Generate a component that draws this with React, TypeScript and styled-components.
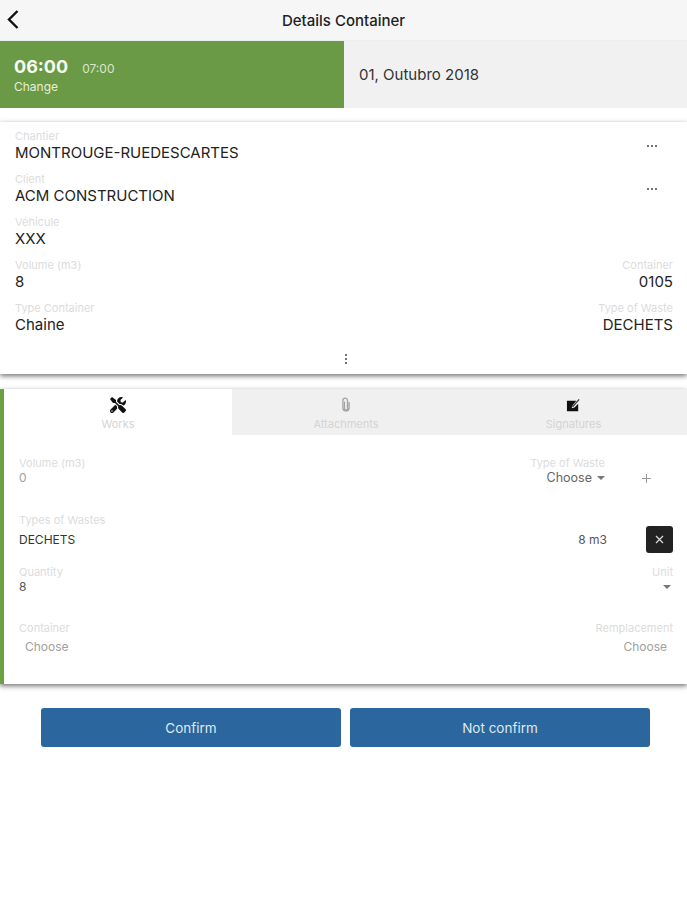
import React from "react";
import styled, { createGlobalStyle } from "styled-components";
import { FaTools } from "react-icons/fa";

const Global = createGlobalStyle`
  html, body { margin: 0; padding: 0; background: #fff; }
  body { font-family: Inter, Roboto, "Liberation Sans", sans-serif; }
`;

const Page = styled.div`
  width: 687px;
  height: 900px;
  overflow: hidden;
  display: flex;
  flex-direction: column;
  background: #fff;
`;

const Header = styled.header`
  height: 40px;
  flex: none;
  display: grid;
  grid-template-columns: 60px 1fr 60px;
  align-items: center;
  background: #f6f6f6;
  border-bottom: 1px solid #eeeeee;
`;

const BackButton = styled.div`
  padding-left: 6px;
  display: flex;
  align-items: center;
`;

const Title = styled.h1`
  margin: 0;
  text-align: center;
  font-size: 15px;
  font-weight: 500;
  color: #222;
`;

const Banner = styled.section`
  height: 67px;
  flex: none;
  display: flex;
  background: #f1f1f1;
`;

const TimeBox = styled.div`
  width: 344px;
  flex: none;
  box-sizing: border-box;
  padding: 15px 0 0 14px;
  background: #6a9a45;
  color: #eef4e8;
`;

const TimeRow = styled.div`
  display: flex;
  align-items: baseline;
  gap: 14px;
  height: 22px;
`;

const TimeStart = styled.span`
  font-size: 18px;
  font-weight: 700;
  color: #f7faf4;
`;

const TimeEnd = styled.span`
  font-size: 12px;
  color: #d9e6cf;
`;

const ChangeLabel = styled.div`
  margin-top: 1px;
  font-size: 12px;
  color: #e6efde;
`;

const DateText = styled.div`
  display: flex;
  align-items: center;
  padding-left: 15px;
  font-size: 15px;
  color: #333;
`;

const InfoCard = styled.section`
  margin-top: 14px;
  height: 252px;
  flex: none;
  box-sizing: border-box;
  padding: 5px 14px 0 15px;
  background: #fff;
  box-shadow: 0 2px 5px rgba(0, 0, 0, 0.55);
  display: flex;
  flex-direction: column;
`;

const InfoRow = styled.div`
  height: 43px;
  flex: none;
  display: flex;
  justify-content: space-between;
`;

const Field = styled.div<{ $right?: boolean }>`
  display: flex;
  flex-direction: column;
  align-items: ${(p) => (p.$right ? "flex-end" : "flex-start")};
`;

const InfoLabel = styled.div`
  height: 16px;
  line-height: 16px;
  margin-top: 1px;
  margin-bottom: -1px;
  font-size: 11px;
  color: #dcdcdc;
`;

const InfoValue = styled.div`
  height: 20px;
  line-height: 20px;
  font-size: 15px;
  color: #222;
`;

const MoreDots = styled.div`
  width: 12px;
  margin: 17px 14px 0 0;
  display: flex;
  gap: 2px;
  height: 4px;
  align-items: center;
`;

const Dot = styled.i`
  width: 2px;
  height: 2px;
  border-radius: 50%;
  background: #444;
`;

const ExpandDots = styled.div`
  margin-top: 12px;
  padding-left: 4px;
  display: flex;
  flex-direction: column;
  align-items: center;
  gap: 2px;
`;

const WorkPanel = styled.section`
  margin-top: 15px;
  height: 295px;
  flex: none;
  box-sizing: border-box;
  border-left: 4px solid #6da041;
  background: #fff;
  box-shadow: 0 2px 5px rgba(0, 0, 0, 0.55);
  display: flex;
  flex-direction: column;
`;

const Tabs = styled.nav`
  height: 46px;
  flex: none;
  display: grid;
  grid-template-columns: 228px 228px 227px;
`;

const Tab = styled.div<{ $active?: boolean }>`
  display: flex;
  flex-direction: column;
  align-items: center;
  padding-top: 7px;
  box-sizing: border-box;
  background: ${(p) => (p.$active ? "#fff" : "#f0f0f0")};
`;

const TabIcon = styled.div`
  height: 18px;
  display: flex;
  align-items: center;
  justify-content: center;
`;

const TabLabel = styled.div`
  margin-top: 3px;
  font-size: 11px;
  line-height: 14px;
  color: #d4d4d4;
`;

const PanelBody = styled.div`
  padding: 21px 14px 0 15px;
  display: flex;
  flex-direction: column;
`;

const FormRow = styled.div<{ $height: number; $top?: number }>`
  height: ${(p) => p.$height}px;
  margin-top: ${(p) => p.$top ?? 0}px;
  flex: none;
  display: flex;
  justify-content: space-between;
`;

const SmallLabel = styled.div`
  height: 14px;
  line-height: 14px;
  font-size: 11px;
  color: #dcdcdc;
`;

const SmallValue = styled.div<{ $indent?: number; $muted?: boolean; $gap?: number }>`
  height: 18px;
  line-height: 18px;
  margin-top: ${(p) => p.$gap ?? 0}px;
  padding: 0 ${(p) => p.$indent ?? 0}px;
  font-size: 12px;
  color: ${(p) => (p.$muted ? "#a0a0a0" : "#555")};
`;

const WasteChooser = styled.div`
  display: flex;
  gap: 14px;
`;

const PlusSign = styled.div`
  width: 54px;
  margin-top: 18px;
  display: flex;
  justify-content: center;
`;

const Choose = styled.div`
  height: 18px;
  line-height: 18px;
  margin-top: -1px;
  font-size: 12.5px;
  color: #666;
  display: flex;
  align-items: center;
  gap: 5px;
`;

const Caret = styled.i`
  width: 0;
  height: 0;
  border-left: 4px solid transparent;
  border-right: 4px solid transparent;
  border-top: 4px solid #777;
`;

const WasteLine = styled.div`
  display: flex;
  align-items: center;
  justify-content: space-between;
  height: 27px;
  margin-top: -1px;
`;

const WasteName = styled.div`
  font-size: 12px;
  color: #333;
`;

const WasteSide = styled.div`
  display: flex;
  align-items: center;
  gap: 39px;
`;

const WasteQty = styled.div`
  font-size: 12px;
  color: #555;
`;

const RemoveButton = styled.div`
  width: 27px;
  height: 27px;
  border-radius: 3px;
  background: #222;
  display: flex;
  align-items: center;
  justify-content: center;
`;

const Actions = styled.div`
  margin-top: 24px;
  padding-left: 41px;
  display: flex;
  gap: 9px;
`;

const ActionButton = styled.button`
  width: 300px;
  height: 39px;
  border: 0;
  border-radius: 3px;
  background: #2b679e;
  color: #dfe9f2;
  font-family: inherit;
  font-size: 13.5px;
  padding: 0;
`;

const Stack = styled.div<{ $right?: boolean }>`
  display: flex;
  flex-direction: column;
  align-items: ${(p) => (p.$right ? "flex-end" : "flex-start")};
`;

const CaretRow = styled.div`
  height: 18px;
  margin-top: -1px;
  display: flex;
  align-items: center;
  padding-right: 2px;
`;

const Fields: [string, string, string?, string?][] = [
  ["Chantier", "MONTROUGE-RUEDESCARTES"],
  ["Client", "ACM CONSTRUCTION"],
  ["Véhicule", "XXX"],
  ["Volume (m3)", "8", "Container", "0105"],
  ["Type Container", "Chaine", "Type of Waste", "DECHETS"],
];

export default function App() {
  return (
    <Page>
      <Global />
      <Header>
        <BackButton>
          <svg width="14" height="22" viewBox="0 0 14 22" fill="none" stroke="#111" strokeWidth="2.4">
            <path d="M11.5 2 3 10.5 11.5 19" />
          </svg>
        </BackButton>
        <Title>Details Container</Title>
        <span />
      </Header>
      <Banner>
        <TimeBox>
          <TimeRow>
            <TimeStart>06:00</TimeStart>
            <TimeEnd>07:00</TimeEnd>
          </TimeRow>
          <ChangeLabel>Change</ChangeLabel>
        </TimeBox>
        <DateText>01, Outubro 2018</DateText>
      </Banner>
      <InfoCard>
        {Fields.map(([label, value, rLabel, rValue], i) => (
          <InfoRow key={label}>
            <Field>
              <InfoLabel>{label}</InfoLabel>
              <InfoValue>{value}</InfoValue>
            </Field>
            {rLabel ? (
              <Field $right>
                <InfoLabel>{rLabel}</InfoLabel>
                <InfoValue>{rValue}</InfoValue>
              </Field>
            ) : i < 2 ? (
              <MoreDots>
                <Dot />
                <Dot />
                <Dot />
              </MoreDots>
            ) : null}
          </InfoRow>
        ))}
        <ExpandDots>
          <Dot />
          <Dot />
          <Dot />
        </ExpandDots>
      </InfoCard>
      <WorkPanel>
        <Tabs>
          <Tab $active>
            <TabIcon>
              <FaTools size={16} color="#111" />
            </TabIcon>
            <TabLabel>Works</TabLabel>
          </Tab>
          <Tab>
            <TabIcon>
              <svg width="10" height="16" viewBox="0 0 10 16" fill="none" stroke="#a4a4a4" strokeWidth="1.3">
                <path d="M3.5 4.5v7a1.5 1.5 0 0 0 3 0V3.5a2.3 2.3 0 0 0-4.6 0v8a3.2 3.2 0 0 0 6.2 0V5" />
              </svg>
            </TabIcon>
            <TabLabel>Attachments</TabLabel>
          </Tab>
          <Tab>
            <TabIcon>
              <svg width="15" height="15" viewBox="0 0 16 16">
                <path d="M1 3h10L7 8l-1 3 3-1 4-4v8H1z" fill="#111" />
                <path d="M7 9.5 14 1.5" stroke="#333" strokeWidth="1.3" />
              </svg>
            </TabIcon>
            <TabLabel>Signatures</TabLabel>
          </Tab>
        </Tabs>
        <PanelBody>
          <FormRow $height={57}>
            <Stack>
              <SmallLabel>Volume (m3)</SmallLabel>
              <SmallValue $muted $gap={-1}>
                0
              </SmallValue>
            </Stack>
            <WasteChooser>
              <Stack $right>
                <SmallLabel>Type of Waste</SmallLabel>
                <Choose>
                  Choose <Caret />
                </Choose>
              </Stack>
              <PlusSign>
                <svg width="9" height="9" viewBox="0 0 9 9" stroke="#999" strokeWidth="1">
                  <path d="M4.5 0v9M0 4.5h9" />
                </svg>
              </PlusSign>
            </WasteChooser>
          </FormRow>
          <SmallLabel>Types of Wastes</SmallLabel>
          <WasteLine>
            <WasteName>DECHETS</WasteName>
            <WasteSide>
              <WasteQty>8 m3</WasteQty>
              <RemoveButton>
                <svg width="9" height="9" viewBox="0 0 9 9" stroke="#ddd" strokeWidth="1.2">
                  <path d="M1 1l7 7M8 1 1 8" />
                </svg>
              </RemoveButton>
            </WasteSide>
          </WasteLine>
          <FormRow $height={56} $top={12}>
            <Stack>
              <SmallLabel>Quantity</SmallLabel>
              <SmallValue $gap={-1}>8</SmallValue>
            </Stack>
            <Stack $right>
              <SmallLabel>Unit</SmallLabel>
              <CaretRow>
                <Caret />
              </CaretRow>
            </Stack>
          </FormRow>
          <FormRow $height={40}>
            <Stack>
              <SmallLabel>Container</SmallLabel>
              <SmallValue $indent={6} $muted $gap={3}>
                Choose
              </SmallValue>
            </Stack>
            <Stack $right>
              <SmallLabel>Remplacement</SmallLabel>
              <SmallValue $indent={6} $muted $gap={3}>
                Choose
              </SmallValue>
            </Stack>
          </FormRow>
        </PanelBody>
      </WorkPanel>
      <Actions>
        <ActionButton>Confirm</ActionButton>
        <ActionButton>Not confirm</ActionButton>
      </Actions>
    </Page>
  );
}
